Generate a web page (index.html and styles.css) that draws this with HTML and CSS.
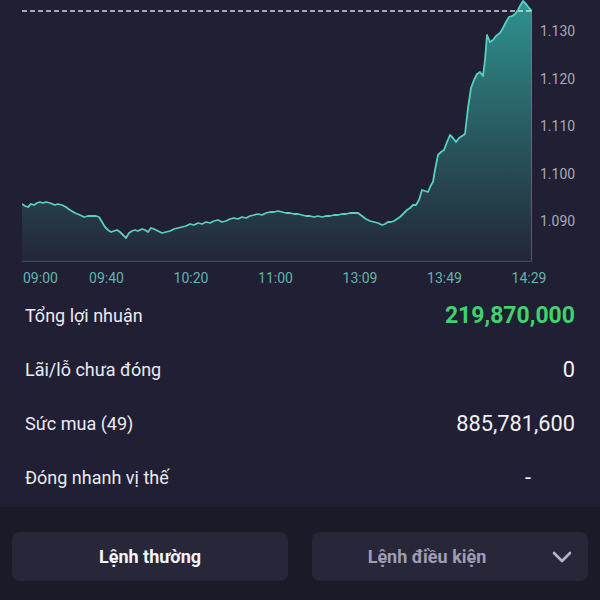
FILE: index.html
```html
<!DOCTYPE html>
<html lang="vi">
<head>
<meta charset="utf-8">
<title>Chart</title>
<link rel="stylesheet" href="styles.css">
</head>
<body>
<div class="screen">
  <section class="chart">
    <svg class="plot" width="510" height="262" viewBox="22 0 510 262">
      <defs>
        <linearGradient id="fill" x1="0" y1="0" x2="0" y2="262" gradientUnits="userSpaceOnUse">
          <stop offset="0" stop-color="#2f9390"/>
          <stop offset="0.55" stop-color="#28555d"/>
          <stop offset="1" stop-color="#232637"/>
        </linearGradient>
      </defs>
      <polygon fill="url(#fill)" points="22,204 25,206 28,207 31,204 34,205 37,203 40,202 43,203 46,202 50,203 55,205 58,204 62,205 66,207 70,210 75,213 80,215 84,217 88,216 92,216 96,216 99,217 102,222 105,227 108,230 111,232 114,231 117,230 120,232 123,235 126,238 129,233 132,231 135,230 138,231 142,229 145,230 148,232 151,228 154,229 158,231 162,233 166,232 170,231 174,229 178,228 182,227 186,226 190,224 194,225 198,223 202,224 206,222 210,223 214,221 218,220 222,222 226,221 230,219 234,218 238,219 242,217 246,218 250,216 254,215 258,214 262,215 266,213 270,212 274,212 278,211 282,212 286,213 290,213 294,214 298,214 302,215 306,216 310,216 314,217 318,216 322,217 326,216 330,216 334,215 338,215 342,214 346,214 350,213 354,213 358,213 362,216 366,219 370,221 374,222 378,223 382,225 385,224 388,222 391,222 394,221 397,219 400,217 404,213 407,210 410,208 413,205 416,205 419,200 422,190 425,191 428,192 431,185 433,182 435,170 438,155 441,152 444,150 447,142 450,135 453,138 456,142 459,138 462,136 465,134 468,108 471,88 474,80 477,74 480,72 483,76 485,60 487,35 490,42 493,40 496,36 500,33 503,28 506,22 509,17 512,16 515,14 518,10 520,6 523,1 526,4 529,8 532,11 532,262 22,262"/>
      <line x1="531.5" y1="11" x2="531.5" y2="262" stroke="#4b9a98" stroke-opacity="0.55" stroke-width="1"/>
      <line x1="22" y1="261.5" x2="532" y2="261.5" stroke="#3a4a58" stroke-width="1.5"/>
      <polyline fill="none" stroke="#57d0bf" stroke-width="1.8" stroke-linejoin="round" points="22,204 25,206 28,207 31,204 34,205 37,203 40,202 43,203 46,202 50,203 55,205 58,204 62,205 66,207 70,210 75,213 80,215 84,217 88,216 92,216 96,216 99,217 102,222 105,227 108,230 111,232 114,231 117,230 120,232 123,235 126,238 129,233 132,231 135,230 138,231 142,229 145,230 148,232 151,228 154,229 158,231 162,233 166,232 170,231 174,229 178,228 182,227 186,226 190,224 194,225 198,223 202,224 206,222 210,223 214,221 218,220 222,222 226,221 230,219 234,218 238,219 242,217 246,218 250,216 254,215 258,214 262,215 266,213 270,212 274,212 278,211 282,212 286,213 290,213 294,214 298,214 302,215 306,216 310,216 314,217 318,216 322,217 326,216 330,216 334,215 338,215 342,214 346,214 350,213 354,213 358,213 362,216 366,219 370,221 374,222 378,223 382,225 385,224 388,222 391,222 394,221 397,219 400,217 404,213 407,210 410,208 413,205 416,205 419,200 422,190 425,191 428,192 431,185 433,182 435,170 438,155 441,152 444,150 447,142 450,135 453,138 456,142 459,138 462,136 465,134 468,108 471,88 474,80 477,74 480,72 483,76 485,60 487,35 490,42 493,40 496,36 500,33 503,28 506,22 509,17 512,16 515,14 518,10 520,6 523,1 526,4 529,8 532,11"/>
      <line x1="22" y1="11" x2="532" y2="11" stroke="#d6d6de" stroke-width="1.5" stroke-dasharray="5 3"/>
    </svg>
    <div class="yaxis">
      <span>1.130</span>
      <span>1.120</span>
      <span>1.110</span>
      <span>1.100</span>
      <span>1.090</span>
    </div>
  </section>
  <div class="times">
    <span class="first">09:00</span>
    <span>09:40</span>
    <span>10:20</span>
    <span>11:00</span>
    <span>13:09</span>
    <span>13:49</span>
    <span>14:29</span>
  </div>
  <section class="stats">
    <div class="row"><span class="label">Tổng lợi nhuận</span><span class="value profit">219,870,000</span></div>
    <div class="row"><span class="label">Lãi/lỗ chưa đóng</span><span class="value">0</span></div>
    <div class="row"><span class="label">Sức mua (49)</span><span class="value">885,781,600</span></div>
    <div class="row"><span class="label">Đóng nhanh vị thế</span><span class="value dash">-</span></div>
  </section>
  <section class="actions">
    <button class="btn primary">Lệnh thường</button>
    <button class="btn secondary"><span class="btn-text">Lệnh điều kiện</span>
      <svg class="chev" width="20" height="12" viewBox="0 0 20 12"><polyline points="2,2 10,10 18,2" fill="none" stroke="#b4b3c4" stroke-width="2.6" stroke-linecap="round" stroke-linejoin="round"/></svg>
    </button>
  </section>
</div>
</body>
</html>
```

FILE: styles.css
```css
* { box-sizing: border-box; }
html, body {
  margin: 0;
  padding: 0;
  background: #211f33;
}
body {
  width: 600px;
  height: 600px;
  overflow: hidden;
  font-family: Roboto, "Noto Sans", sans-serif;
  color: #ececf2;
}
.screen {
  display: flex;
  flex-direction: column;
  height: 600px;
}
.chart {
  display: flex;
  height: 262px;
  padding-left: 22px;
}
.plot {
  display: block;
  flex: none;
}
.yaxis {
  display: flex;
  flex-direction: column;
  margin-left: 8px;
  padding-top: 8px;
}
.yaxis span {
  font-size: 14px;
  line-height: 47.5px;
  color: #a9a8b7;
}
.times {
  display: grid;
  grid-template-columns: 42.25px repeat(6, 84.5px);
  margin-left: 22px;
  height: 26px;
  padding-top: 5px;
  align-items: center;
}
.times span {
  font-size: 14px;
  color: #63b4ae;
  text-align: center;
}
.times span.first {
  text-align: left;
  padding-left: 1px;
}
.stats {
  display: flex;
  flex-direction: column;
  padding-bottom: 3px;
}
.row {
  display: flex;
  justify-content: space-between;
  align-items: center;
  height: 54px;
  padding: 0 25px;
}
.label {
  font-size: 18px;
  color: #ebebf1;
}
.value {
  font-size: 21.8px;
  color: #f0f0f4;
}
.value.profit {
  font-size: 23px;
  color: #3fd36c;
  font-weight: 700;
}
.value.dash {
  padding-right: 44px;
}
.actions {
  flex: 1;
  background: #1b1a29;
  display: grid;
  grid-template-columns: 1fr 1fr;
  gap: 24px;
  padding: 25px 12px 0;
  align-content: start;
}
.btn {
  height: 49px;
  border: none;
  border-radius: 8px;
  background: #282739;
  font-family: Roboto, "Noto Sans", sans-serif;
  font-size: 18px;
  font-weight: 700;
  display: flex;
  align-items: center;
  justify-content: center;
  padding: 0;
}
.btn.primary {
  color: #f4f4f8;
}
.btn.secondary {
  color: #9f9db3;
  padding-right: 16px;
}
.btn-text {
  flex: 1;
  text-align: center;
  padding-right: 10px;
}
.chev {
  display: block;
  flex: none;
}
```
